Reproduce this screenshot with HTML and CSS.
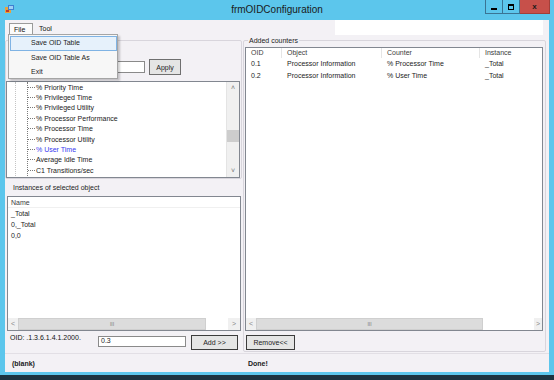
FILE: index.html
```html
<!DOCTYPE html>
<html lang="en">
<head>
  <meta charset="UTF-8" />
  <title>frmOIDConfiguration</title>
  <link rel="stylesheet" href="styles.css">
</head>
<body>
  <div class="window">
    <div class="titlebar">
      <div class="app-icon">
        <svg width="9" height="9" viewBox="0 0 9 9">
          <rect x="0" y="2" width="6" height="6" fill="#e9a23b"/>
          <rect x="3" y="0" width="6" height="5" fill="#3f7fd0"/>
          <rect x="4" y="1" width="4" height="3" fill="#9fd0f5"/>
          <rect x="1" y="5" width="3" height="2" fill="#c0392b"/>
        </svg>
      </div>
      <div class="title">frmOIDConfiguration</div>
      <div class="controls">
        <span class="ctl ctl-min"><span class="glyph-min"></span></span>
        <span class="ctl ctl-max"><span class="glyph-max"></span></span>
        <span class="ctl ctl-close">x</span>
      </div>
    </div>

    <div class="client">
      <div class="menubar">
        <span class="menu-item menu-file">File</span>
        <span class="menu-item menu-tool">Tool</span>
      </div>

      <div class="dropdown">
        <div class="dd-item active">Save OID Table</div>
        <div class="dd-item">Save OID Table As</div>
        <div class="dd-item">Exit</div>
      </div>

      <div class="content">
        <div class="left-col">
          <div class="group filter-group">
            <div class="filter-row">
              <div class="textbox filter-box"></div>
              <div class="button apply-btn">Apply</div>
            </div>
            <div class="tree">
              <div class="tree-body">
                <div class="branch">
                  <div class="leaves">
                    <div class="leaf">% Priority Time</div>
                    <div class="leaf">% Privileged Time</div>
                    <div class="leaf">% Privileged Utility</div>
                    <div class="leaf">% Processor Performance</div>
                    <div class="leaf">% Processor Time</div>
                    <div class="leaf">% Processor Utility</div>
                    <div class="leaf selected">% User Time</div>
                    <div class="leaf">Average Idle Time</div>
                    <div class="leaf">C1 Transitions/sec</div>
                  </div>
                </div>
              </div>
              <div class="vscroll">
                <div class="vs-arrow">&#708;</div>
                <div class="vs-track"><div class="vs-thumb"></div></div>
                <div class="vs-arrow">&#709;</div>
              </div>
            </div>
          </div>

          <div class="caption">Instances of selected object</div>

          <div class="listview instances">
            <div class="lv-head inst-head">Name</div>
            <div class="lv-row inst-row">_Total</div>
            <div class="lv-row inst-row">0,_Total</div>
            <div class="lv-row inst-row">0,0</div>
            <div class="lv-fill"></div>
            <div class="hscroll">
              <div class="hs-arrow">&lt;</div>
              <div class="hs-thumb inst-thumb">III</div>
              <div class="hs-track"></div>
              <div class="hs-arrow hs-right">&gt;</div>
            </div>
          </div>

          <div class="oid-row">
            <div class="oid-label">OID: .1.3.6.1.4.1.2000.</div>
            <div class="textbox oid-box">0.3</div>
            <div class="button add-btn">Add &gt;&gt;</div>
          </div>
        </div>

        <div class="right-col">
          <div class="group counters-group">
            <span class="group-caption">Added counters</span>
            <div class="listview counters">
              <div class="lv-grid lv-head counter-head">
                <span>OID</span><span>Object</span><span>Counter</span><span>Instance</span>
              </div>
              <div class="lv-grid counter-row">
                <span>0.1</span><span>Processor Information</span><span>% Processor Time</span><span>_Total</span>
              </div>
              <div class="lv-grid counter-row">
                <span>0.2</span><span>Processor Information</span><span>% User Time</span><span>_Total</span>
              </div>
              <div class="lv-fill"></div>
              <div class="hscroll">
                <div class="hs-arrow">&lt;</div>
                <div class="hs-thumb counter-thumb">III</div>
                <div class="hs-track"></div>
                <div class="hs-arrow hs-right narrow">&gt;</div>
              </div>
            </div>
            <div class="button remove-btn">Remove&lt;&lt;</div>
          </div>
        </div>
      </div>

      <div class="statusbar">
        <span>(blank)</span>
        <span>Done!</span>
      </div>
    </div>
  </div>
  <div class="screen-edge"></div>
</body>
</html>
```

FILE: styles.css
```css
body {
  margin: 0;
  font-family: "Liberation Sans", Arial, sans-serif;
  font-size: 7px;
  color: #1c1c1c;
}
.window {
  width: 554px;
  height: 375px;
  background-color: #5cc6ec;
  display: flex;
  flex-direction: column;
}
.screen-edge {
  width: 554px;
  height: 5px;
  background-color: #1c3340;
}
.titlebar {
  height: 20px;
  flex: none;
  display: grid;
  grid-template-columns: 1fr auto 1fr;
  align-items: start;
}
.app-icon {
  margin: 5px 0 0 5px;
  width: 9px;
  height: 9px;
}
.title {
  font-size: 10px;
  line-height: 20px;
  color: #1a1a1a;
}
.controls {
  justify-self: end;
  display: flex;
  margin-right: 4px;
}
.ctl {
  height: 14px;
  box-sizing: border-box;
  border: 1px solid #3a7494;
  border-top: none;
  display: flex;
  align-items: center;
  justify-content: center;
}
.ctl-min {
  width: 18px;
}
.ctl-max {
  width: 17px;
  border-left: none;
}
.ctl-close {
  width: 30px;
  border-left: none;
  border-color: #a23f39;
  background-color: #c7504a;
  font-size: 8px;
  font-weight: bold;
  color: #1a1a1a;
}
.glyph-min {
  width: 6px;
  height: 2px;
  margin-top: 4px;
  background-color: #000;
}
.glyph-max {
  width: 4px;
  height: 3px;
  border: 1px solid #000;
  border-top-width: 2px;
}
.client {
  margin: 0 5px;
  height: 352px;
  flex: none;
  background-color: #f3f1f5;
  position: relative;
  display: flex;
  flex-direction: column;
}
.menubar {
  height: 15px;
  flex: none;
  display: flex;
  align-items: flex-end;
  padding-left: 4px;
  background: linear-gradient(to right, #f3f1f5 330px, #ffffff 330px, #ffffff 538px, #f3f1f5 538px);
}
.menu-item {
  height: 12px;
  line-height: 12px;
  box-sizing: border-box;
  color: #111;
}
.menu-file {
  width: 24px;
  padding-left: 4px;
  border: 1px solid #9a9a9a;
  border-bottom: none;
  background-color: #fbfbfb;
}
.menu-tool {
  padding-left: 6px;
}
.dropdown {
  position: absolute;
  left: 3px;
  top: 14px;
  width: 110px;
  height: 45px;
  box-sizing: border-box;
  padding: 1px 0 0 1px;
  border: 1px solid #a5a5a5;
  background-color: #f7f7f7;
  box-shadow: 2px 2px 2px rgba(0, 0, 0, 0.2);
  z-index: 10;
}
.dd-item {
  height: 14.5px;
  line-height: 12.5px;
  box-sizing: border-box;
  padding-left: 20px;
  border: 1px solid transparent;
  color: #1c1c1c;
}
.dd-item.active {
  border-color: #7fb3e4;
  background-color: #e6f1fb;
}
.content {
  flex: 1;
  display: flex;
}
.left-col {
  width: 238px;
  flex: none;
  display: flex;
  flex-direction: column;
}
.right-col {
  flex: 1;
}
.group {
  box-sizing: border-box;
  border: 1px solid #d8d5dc;
  border-radius: 2px;
}
.filter-group {
  margin-top: 5px;
  width: 237px;
  height: 139px;
  display: flex;
  flex-direction: column;
}
.filter-row {
  margin-top: 18px;
  height: 16px;
  display: flex;
  align-items: center;
  gap: 4px;
  padding-left: 54px;
}
.textbox {
  box-sizing: border-box;
  border: 1px solid #8a8a8a;
  background-color: #fff;
}
.filter-box {
  width: 85px;
  height: 12px;
}
.button {
  box-sizing: border-box;
  border: 1px solid #6f6f6f;
  background-color: #e5e5e5;
  display: flex;
  align-items: center;
  justify-content: center;
  color: #1c1c1c;
}
.apply-btn {
  width: 32px;
  height: 16px;
}
.tree {
  margin-top: 6px;
  width: 234px;
  height: 97px;
  box-sizing: border-box;
  border: 1px solid #828790;
  background-color: #fff;
  display: flex;
}
.tree-body {
  flex: 1;
  overflow: hidden;
  padding-left: 8px;
}
.branch {
  border-left: 1px dotted #c4c4c4;
  padding-left: 11px;
}
.leaves {
  border-left: 1px dotted #7a7a7a;
}
.leaf {
  height: 10.4px;
  display: flex;
  align-items: center;
  white-space: nowrap;
  color: #1a1a1a;
}
.leaf::before {
  content: "";
  width: 7px;
  margin-right: 1px;
  border-top: 1px dotted #7a7a7a;
}
.leaf.selected {
  color: #3a3af0;
}
.vscroll {
  width: 12px;
  flex: none;
  display: flex;
  flex-direction: column;
  background-color: #f0f0f0;
  border-left: 1px solid #e4e4e4;
}
.vs-arrow {
  height: 12px;
  line-height: 12px;
  text-align: center;
  font-size: 7px;
  color: #777;
}
.vs-track {
  flex: 1;
}
.vs-thumb {
  margin-top: 36px;
  height: 12px;
  background-color: #cdcdcd;
}
.caption {
  height: 17px;
  box-sizing: border-box;
  padding: 3px 0 0 8px;
  line-height: 12px;
}
.listview {
  box-sizing: border-box;
  border: 1px solid #828790;
  background-color: #fff;
  display: flex;
  flex-direction: column;
}
.instances {
  margin-left: 2px;
  width: 234px;
  height: 135px;
}
.inst-head {
  height: 11px;
  line-height: 11px;
  padding-left: 3px;
  border-bottom: 1px solid #f0f0f0;
  box-sizing: border-box;
  color: #3c3c3c;
}
.lv-row {
  height: 11px;
  line-height: 11px;
  padding-left: 3px;
}
.lv-fill {
  flex: 1;
}
.hscroll {
  height: 12px;
  flex: none;
  display: flex;
  background-color: #f0f0f0;
}
.hs-arrow {
  width: 10px;
  line-height: 12px;
  text-align: center;
  color: #888;
  font-size: 7px;
}
.hs-right {
  width: 12px;
}
.hs-right.narrow {
  width: 8px;
}
.hs-thumb {
  box-sizing: border-box;
  border: 1px solid #cfcfcf;
  background-color: #dcdcdc;
  text-align: center;
  line-height: 10px;
  font-size: 5px;
  color: #777;
}
.inst-thumb {
  width: 188px;
}
.counter-thumb {
  width: 227px;
}
.hs-track {
  flex: 1;
  background-color: #fff;
}
.oid-row {
  height: 22px;
  display: flex;
  align-items: flex-start;
  padding-left: 5px;
}
.oid-label {
  width: 88px;
  margin-top: 2px;
  line-height: 10px;
  color: #111;
}
.oid-box {
  width: 88px;
  height: 11px;
  margin-top: 5px;
  padding-left: 2px;
  line-height: 8px;
}
.add-btn {
  width: 47px;
  height: 15px;
  margin: 4px 0 0 5px;
  border-color: #3c3c3c;
}
.counters-group {
  margin-top: 5px;
  width: 303px;
  height: 312px;
  position: relative;
}
.group-caption {
  position: absolute;
  top: -5px;
  left: 4px;
  padding: 0 1px;
  line-height: 9px;
  background-color: #f3f1f5;
}
.counters {
  margin: 6px 0 0 1px;
  width: 298px;
  height: 284px;
}
.lv-grid {
  display: grid;
  grid-template-columns: 36px 100px 98px 1fr;
}
.lv-grid span {
  padding-left: 5px;
  white-space: nowrap;
}
.counter-head {
  height: 10px;
  line-height: 10px;
  color: #3c3c3c;
}
.counter-head span {
  border-right: 1px solid #e5e5e5;
}
.counter-head span:last-child {
  border-right: none;
}
.counter-row {
  height: 11.5px;
  line-height: 11.5px;
}
.remove-btn {
  width: 49px;
  height: 15px;
  margin: 4px 0 0 2px;
  border-color: #3c3c3c;
}
.statusbar {
  height: 19px;
  flex: none;
  box-sizing: border-box;
  border-top: 1px solid #e2dfe5;
  padding-left: 7px;
  display: grid;
  grid-template-columns: 236px 1fr;
  align-items: center;
  font-weight: bold;
  color: #1a1a1a;
}
```
